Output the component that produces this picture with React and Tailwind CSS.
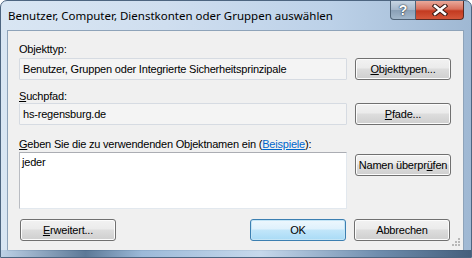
function Btn({ children, focused = false, className = "" }) {
  const look = focused
    ? "border-[#3c7fb1] bg-[linear-gradient(to_bottom,#edf7fd_0%,#dff1fc_45%,#c2e6fa_50%,#a9dbf6_100%)] shadow-[inset_0_0_0_1px_#c4e5f6]"
    : "border-[#707070] bg-[linear-gradient(to_bottom,#f2f2f2_0%,#ebebeb_45%,#dddddd_50%,#cfcfcf_100%)] shadow-[inset_0_0_0_1px_#fcfcfc]";
  return (
    <button
      className={`h-[22px] w-[96px] rounded-[3px] border text-[11px] tracking-[-0.2px] text-black leading-none flex items-center justify-center ${look} ${className}`}
    >
      {children}
    </button>
  );
}

function ReadOnlyField({ value }) {
  return (
    <div className="h-[22px] w-[328px] border border-[#d6dbe2] bg-[#f4f4f4] rounded-[1px] flex items-center pl-[3px] text-[11px] text-black">
      {value}
    </div>
  );
}

export default function App() {
  return (
    <div
      className="w-[472px] h-[258px] relative overflow-hidden rounded-t-[7px] border border-[#4d6580] bg-[linear-gradient(to_right,#d9e6f3_0%,#cfdeef_35%,#bcd1e8_70%,#9fb8d3_100%)]"
      style={{ fontFamily: '"Liberation Sans", Arial, sans-serif' }}
    >
      {/* title bar */}
      <div className="h-[29px] flex items-start">
        <div
          className="pl-[7px] pt-[6px] text-[11.5px] text-black whitespace-nowrap"
          style={{ fontFamily: '"Noto Sans", "Open Sans", sans-serif' }}
        >
          Benutzer, Computer, Dienstkonten oder Gruppen auswählen
        </div>
        <div className="ml-auto mr-[7px] flex">
          <div className="w-[26px] h-[19px] rounded-bl-[4px] border border-t-0 border-[#4f6377] bg-[linear-gradient(to_bottom,#c6d4e2_0%,#a6b8cb_48%,#8aa0b6_52%,#a2b7cb_100%)] flex items-center justify-center">
            <span className="text-white font-bold text-[14px] leading-none [text-shadow:0_0_1px_#26313d,0_0_2px_#26313d]">?</span>
          </div>
          <div className="w-[48px] h-[19px] rounded-br-[4px] border border-l-0 border-t-0 border-[#5b2a22] bg-[linear-gradient(to_bottom,#e9a99b_0%,#d9705c_45%,#c33a20_55%,#d4563a_100%)] flex items-center justify-center">
            <svg width="16" height="12" viewBox="0 0 16 12">
              <path d="M3 2 L13 10 M13 2 L3 10" stroke="#3a1a14" strokeWidth="4.6" strokeLinecap="square" />
              <path d="M3 2 L13 10 M13 2 L3 10" stroke="#ffffff" strokeWidth="2.6" strokeLinecap="square" />
            </svg>
          </div>
        </div>
      </div>

      {/* client area */}
      <div className="ml-[6px] w-[457px] h-[221px] border border-[#8ea3b9] bg-[#f0f0f0] text-[11px] tracking-[-0.2px] text-black">
        <div className="pl-[11px] pt-[11px]">
          <div className="h-[15px] leading-[15px]">Objekttyp:</div>
          <div className="mt-[1px] flex gap-[8px] items-start">
            <ReadOnlyField value="Benutzer, Gruppen oder Integrierte Sicherheitsprinzipale" />
            <Btn>
              <span><span className="underline">O</span>bjekttypen...</span>
            </Btn>
          </div>

          <div className="mt-[9px] h-[14px] leading-[14px]">
            <span className="underline">S</span>uchpfad:
          </div>
          <div className="flex gap-[8px] items-start">
            <ReadOnlyField value="hs-regensburg.de" />
            <Btn>
              <span><span className="underline">P</span>fade...</span>
            </Btn>
          </div>

          <div className="mt-[11px] h-[16px] leading-[16px]">
            <span className="underline">G</span>eben Sie die zu verwendenden Objektnamen ein (
            <span className="text-[#0066cc] underline">Beispiele</span>):
          </div>
          <div className="flex gap-[8px] items-start">
            <div className="w-[328px] h-[57px] bg-white border border-[#e2e8ee] border-t-[#abadb3] border-l-[#b9bcc2] pl-[2px] pt-[2px] leading-[14px]">
              jeder
            </div>
            <Btn className="mt-[2px]">
              <span>Namen überpr<span className="underline">ü</span>fen</span>
            </Btn>
          </div>

          <div className="mt-[10px] flex items-start">
            <Btn className="ml-[1px]">
              <span><span className="underline">E</span>rweitert...</span>
            </Btn>
            <Btn focused className="ml-[134px]">OK</Btn>
            <Btn className="ml-[8px]">Abbrechen</Btn>
          </div>
        </div>
      </div>

      {/* resize grip */}
      <div className="absolute right-[11px] bottom-[11px] grid grid-cols-3 gap-[1px]">
        <span />
        <span />
        <span className="w-[2px] h-[2px] bg-[#b8b8b8]" />
        <span />
        <span className="w-[2px] h-[2px] bg-[#b8b8b8]" />
        <span className="w-[2px] h-[2px] bg-[#b8b8b8]" />
        <span className="w-[2px] h-[2px] bg-[#b8b8b8]" />
        <span className="w-[2px] h-[2px] bg-[#b8b8b8]" />
        <span className="w-[2px] h-[2px] bg-[#b8b8b8]" />
      </div>

      {/* bottom frame glass streak */}
      <div className="absolute left-0 right-0 bottom-0 h-[7px] bg-[linear-gradient(to_right,#b7cce3_0%,#3e5e80_18%,#8fb0d2_30%,#c7d9ec_55%,#5f7fa1_80%,#2e4866_100%)] opacity-80" />
    </div>
  );
}
